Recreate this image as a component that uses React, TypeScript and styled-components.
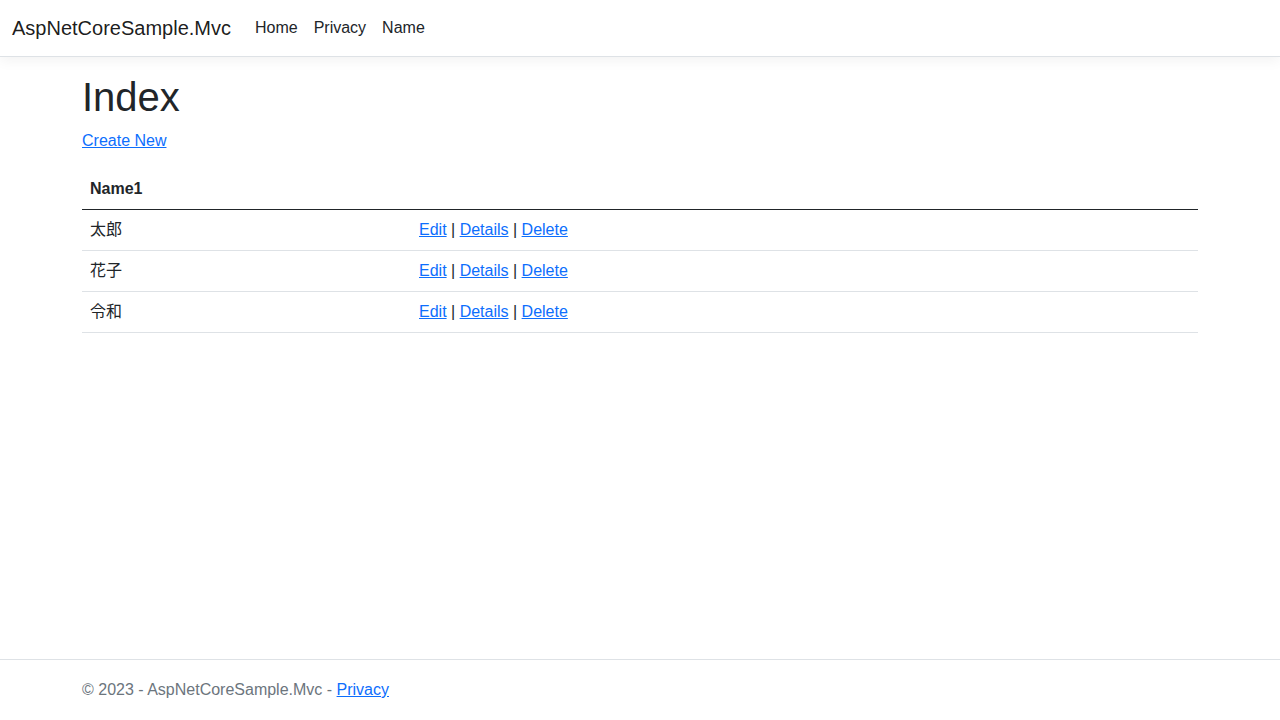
import React from "react";
import styled, { createGlobalStyle } from "styled-components";

const GlobalStyle = createGlobalStyle`
  html, body { margin: 0; padding: 0; }
  body {
    font-family: "Liberation Sans", Arial, "Noto Sans CJK JP", sans-serif;
    font-size: 16px;
    line-height: 1.5;
    color: #212529;
    background: #fff;
  }
  * { box-sizing: border-box; }
`;

const Page = styled.div`
  min-height: 720px;
  display: flex;
  flex-direction: column;
`;

const Navbar = styled.header`
  display: flex;
  align-items: center;
  padding: 8px 12px;
  background: #fff;
  border-bottom: 1px solid #dee2e6;
  box-shadow: 0 4px 12px rgba(0, 0, 0, 0.05);
  margin-bottom: 16px;
`;

const Brand = styled.a`
  font-size: 20px;
  line-height: 30px;
  padding: 5px 0;
  margin-right: 16px;
  color: rgba(0, 0, 0, 0.9);
  text-decoration: none;
  white-space: nowrap;
`;

const NavList = styled.nav`
  display: flex;
`;

const NavLink = styled.a`
  padding: 8px;
  color: #212529;
  text-decoration: none;
  font-size: 16px;
  line-height: 24px;
`;

const Container = styled.main`
  width: 1140px;
  margin: 0 auto;
  padding: 0 12px;
  flex: 1;
`;

const Title = styled.h1`
  font-size: 40px;
  font-weight: 500;
  line-height: 1.2;
  margin: 0 0 8px;
`;

const Para = styled.p`
  margin: 0 0 16px;
`;

const Link = styled.a`
  color: #0d6efd;
  text-decoration: underline;
`;

const Table = styled.table`
  width: 100%;
  border-collapse: collapse;
  margin-bottom: 16px;
`;

const Th = styled.th<{ $w?: string }>`
  text-align: left;
  font-weight: 700;
  padding: 8px;
  border-bottom: 1px solid #212529;
  width: ${(p) => p.$w ?? "auto"};
`;

const Td = styled.td`
  padding: 8px;
  border-bottom: 1px solid #dee2e6;
`;

const Footer = styled.footer`
  border-top: 1px solid #dee2e6;
  line-height: 60px;
  color: #6c757d;
  white-space: nowrap;
`;

const FooterInner = styled.div`
  width: 1140px;
  margin: 0 auto;
  padding: 0 12px;
`;

const rows = ["太郎", "花子", "令和"];

export default function App() {
  return (
    <Page>
      <GlobalStyle />
      <Navbar>
        <Brand href="#">AspNetCoreSample.Mvc</Brand>
        <NavList>
          <NavLink href="#">Home</NavLink>
          <NavLink href="#">Privacy</NavLink>
          <NavLink href="#">Name</NavLink>
        </NavList>
      </Navbar>
      <Container>
        <Title>Index</Title>
        <Para>
          <Link href="#">Create New</Link>
        </Para>
        <Table>
          <thead>
            <tr>
              <Th $w="329px">Name1</Th>
              <Th></Th>
            </tr>
          </thead>
          <tbody>
            {rows.map((r) => (
              <tr key={r}>
                <Td>{r}</Td>
                <Td>
                  <Link href="#">Edit</Link> | <Link href="#">Details</Link> |{" "}
                  <Link href="#">Delete</Link>
                </Td>
              </tr>
            ))}
          </tbody>
        </Table>
      </Container>
      <Footer>
        <FooterInner>
          © 2023 - AspNetCoreSample.Mvc - <Link href="#">Privacy</Link>
        </FooterInner>
      </Footer>
    </Page>
  );
}
